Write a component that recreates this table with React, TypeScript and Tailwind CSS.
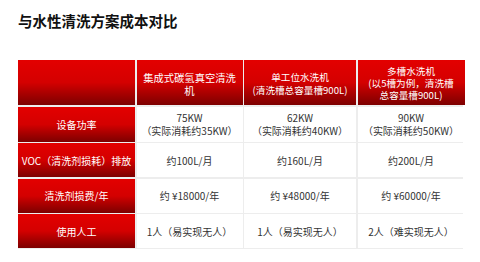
const rows = [
  { label: "设备功率", cells: [["75KW", "（实际消耗约35KW）"], ["62KW", "（实际消耗约40KW）"], ["90KW", "（实际消耗约50KW）"]] },
  { label: "VOC（清洗剂损耗）排放", cells: [["约100L/月"], ["约160L/月"], ["约200L/月"]] },
  { label: "清洗剂损费/年", cells: [["约 ¥18000/年"], ["约 ¥48000/年"], ["约 ¥60000/年"]] },
  { label: "使用人工", cells: [["1人（易实现无人）"], ["1人（易实现无人）"], ["2人（难实现无人）"]] },
];

const red = "bg-gradient-to-b from-[#e30000] via-[#d40000] to-[#7d0000] text-white";

export default function App() {
  return (
    <div
      className="w-[480px] h-[262px] bg-white px-[18px] pt-[11px]"
      style={{ fontFamily: '"Noto Sans CJK SC", "Noto Sans", sans-serif' }}
    >
      <h1 className="text-[14.5px] font-bold text-[#111] leading-[20px]">与水性清洗方案成本对比</h1>

      <div className="mt-[29px] w-[445px] grid grid-cols-[117px_106px_112px_107px] gap-[1.5px] bg-[#ededed] border-r border-b border-[#ededed]">
        {/* header */}
        <div className={`${red} h-[45px]`} />
        <div className={`${red} h-[45px] flex flex-col items-center justify-center pt-[3px] text-[10.3px] leading-[13px] text-center`}>
          <span>集成式碳氢真空清洗</span>
          <span>机</span>
        </div>
        <div className={`${red} h-[45px] flex flex-col items-center justify-center pt-[3px] text-[9.6px] leading-[13px] text-center`}>
          <span>单工位水洗机</span>
          <span>(清洗槽总容量槽900L)</span>
        </div>
        <div className={`${red} h-[45px] flex flex-col items-center justify-center pt-[1px] text-[9.6px] leading-[12px] text-center`}>
          <span>多槽水洗机</span>
          <span>(以5槽为例，清洗槽</span>
          <span>总容量槽900L)</span>
        </div>

        {rows.map((r, i) => (
          <div key={r.label} className="contents">
            <div className={`${red} ${i === 0 ? "h-[35px]" : "h-[34px]"} flex items-center justify-center text-[10px]`}>
              {r.label}
            </div>
            {r.cells.map((c, j) => (
              <div
                key={j}
                className="bg-white flex flex-col items-center justify-center text-[10px] leading-[13px] text-[#333]"
              >
                {c.map((t) => (
                  <span key={t}>{t}</span>
                ))}
              </div>
            ))}
          </div>
        ))}
      </div>
    </div>
  );
}
